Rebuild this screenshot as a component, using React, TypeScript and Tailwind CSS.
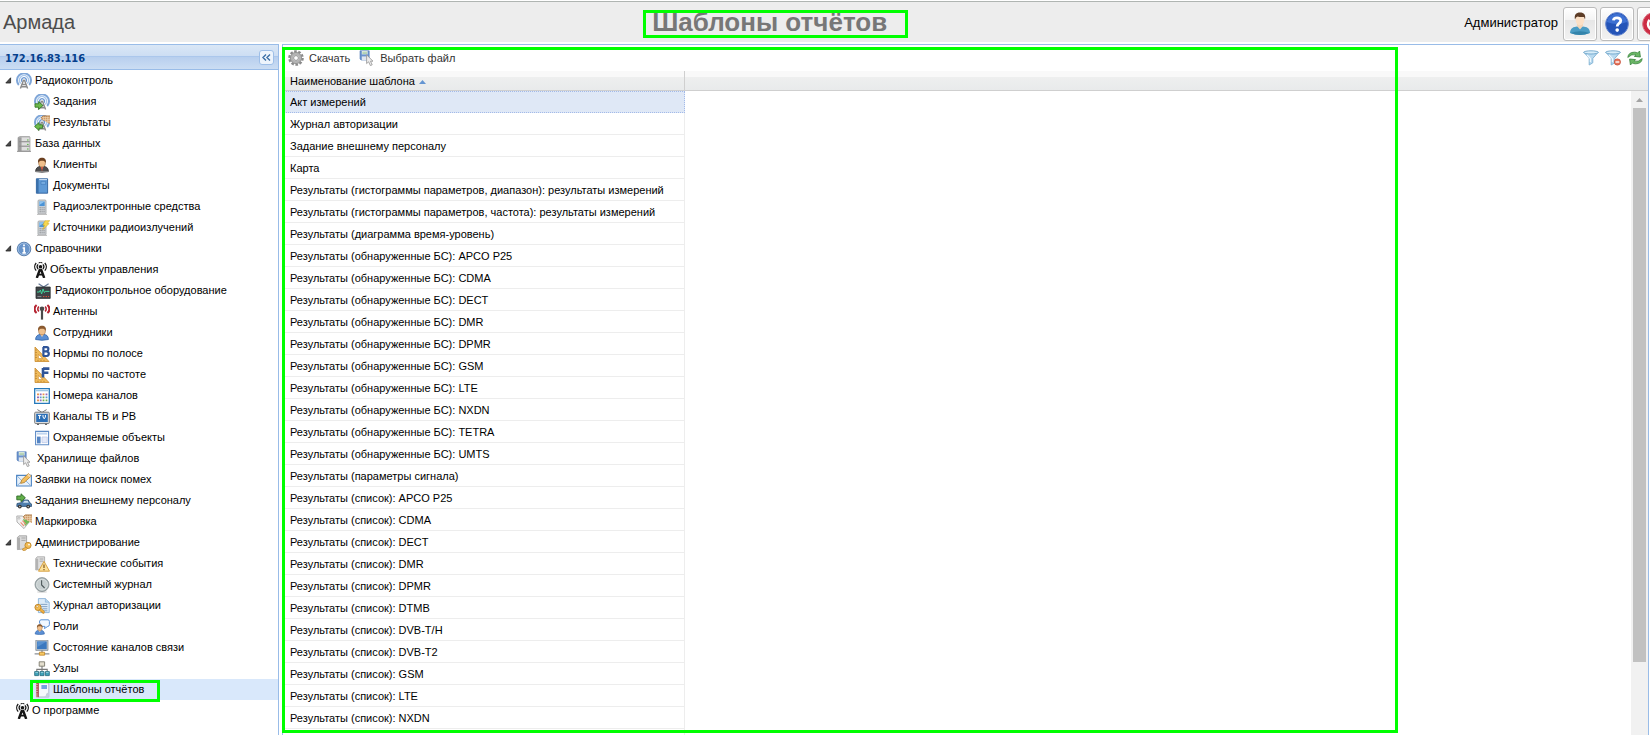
import { useState } from "react";
import type { ReactNode } from "react";

function Svg({ w = 16, h = 16, box, children }: { w?: number; h?: number; box?: string; children: ReactNode }) {
  return (
    <svg width={w} height={h} viewBox={box ?? `0 0 ${w} ${h}`} className="block shrink-0" aria-hidden="true">
      {children}
    </svg>
  );
}

function Waves() {
  return (
    <g fill="none">
      <path d="M2.8 12A7 7 0 1 1 13.2 12" stroke="#7fa6d8" strokeWidth="2" />
      <path d="M4.7 10.4A4.6 4.6 0 1 1 11.3 10.4" stroke="#a9c8ec" strokeWidth="1.5" />
      <path d="M6.2 8.8A2.4 2.4 0 1 1 9.8 8.8" stroke="#6f9ad2" strokeWidth="1.3" />
      <path d="M7.7 6.8L4.4 15.6M8.3 6.8L11.6 15.6M6.2 11.5H9.8M5.4 13.8H10.6" stroke="#8b8b8b" strokeWidth="1.4" />
    </g>
  );
}

function Hatch() {
  return (
    <g>
      <path d="M7 3L9 .8H16V9L14 8L11 6L8 5Z" fill="#cd9a68" />
      <path d="M8 2.5H15M9 4.5H16M11 6.5H16M9.5 1V5M11.5 1V6M13.5 1V8M15 1V8" stroke="#efd3b0" strokeWidth=".6" />
      <path d="M7 3L9 1H16" fill="none" stroke="#a87848" strokeWidth=".8" />
    </g>
  );
}

function Server() {
  return (
    <g>
      <path d="M2 1.5L4 .5H13.5L14 1.5V15H2Z" fill="#b9b9b9" stroke="#9b9b9b" strokeWidth=".7" />
      <path d="M2 1.5H5V15H2Z" fill="#9d9d9d" />
      <path d="M6 1.6H13.4V5.2H6ZM6 6.2H13.4V9.8H6ZM6 10.8H13.4V14.4H6Z" fill="#dedede" />
      <path d="M3 5.7H13.5M3 10.2H13.5M1 15.4H15" stroke="#8b8b8b" strokeWidth=".9" />
      <path d="M11 4H12.6M11 8.4H12.6M11 13H12.6" stroke="#58b442" strokeWidth="1" />
    </g>
  );
}

function Phone() {
  return (
    <g>
      <rect x="4" y="1" width="8" height="14" rx="1" fill="#d2d5d8" stroke="#9a9ea1" strokeWidth=".8" />
      <rect x="5.3" y="2.5" width="5.4" height="4.6" fill="#4b93d6" />
      <path d="M5.3 2.5H10.7L5.3 6Z" fill="#8fc4f0" />
      <path d="M5.4 8.8H7M7.4 8.8H8.8M9.3 8.8H10.8M5.4 10.8H7M7.4 10.8H8.8M9.3 10.8H10.8M5.4 12.8H7M7.4 12.8H8.8M9.3 12.8H10.8" stroke="#8d9195" strokeWidth="1" />
      <path d="M3 15.4H13" stroke="#bcbcbc" />
    </g>
  );
}

function Person({ hair = "#8a5a30", body = "#5b8fd4", edge = "#2e62a8" }: { hair?: string; body?: string; edge?: string }) {
  return (
    <g>
      <path d="M1.6 14.5C1.6 11 4 9.6 6 9.4H10C12.4 9.6 14.4 11 14.4 14.5Q8 16 1.6 14.5Z" fill={body} stroke={edge} strokeWidth=".8" />
      <path d="M6 9L8 12L10 9Z" fill="#f5d6b4" />
      <ellipse cx="8" cy="5.8" rx="3.4" ry="4.1" fill="#f0c08c" stroke="#9c6a3c" strokeWidth=".6" />
      <path d="M4.2 6C3.6 2.4 5.2 .8 8 .8S12.4 2.4 11.8 6C11 4.4 10 3.8 8 3.8S5 4.4 4.2 6Z" fill={hair} />
    </g>
  );
}

function Ruler({ children }: { children: ReactNode }) {
  return (
    <g>
      <path d="M1 1L15 15.5H1Z" fill="#f0bb5c" stroke="#c98a2c" strokeWidth=".8" />
      <path d="M4.4 8.4L8.8 12.6H4.4Z" fill="#fff" stroke="#c98a2c" strokeWidth=".6" />
      <path d="M1.4 4H2.8M1.4 6.5H2.8M1.4 9H2.8M1.4 11.5H2.8M4 13.8V15M7 13.8V15M10 13.8V15" stroke="#9a6418" strokeWidth=".6" />
      {children}
    </g>
  );
}

function FloppyCursor() {
  return (
    <g>
      <path d="M1 .8H10.2V10H2L1 9Z" fill="#6b93cd" stroke="#4f79b5" strokeWidth=".6" />
      <path d="M2.8 1H8.6V4.4H2.8Z" fill="#e9f2e9" />
      <path d="M3.4 2.2H8M3.4 3.4H8" stroke="#7fb37f" strokeWidth=".6" />
      <path d="M2.8 6.4H8.4V10H2.8Z" fill="#dfe6ef" />
      <path d="M7.6 4.8V13.6L9.6 11.8L11.4 15.6L13.2 14.8L11.5 11.2H14Z" fill="#ececec" stroke="#939393" strokeWidth=".8" />
    </g>
  );
}

function GreenArrow({ flip = false }: { flip?: boolean }) {
  return (
    <path
      d={flip ? "M.6 11.5L5 7.6V9.8H8.6V13.2H5V15.4Z" : "M9 11.5L4.6 7.6V9.8H1V13.2H4.6V15.4Z"}
      fill="#6dbb4c"
      stroke="#38772a"
      strokeWidth=".9"
      strokeLinejoin="round"
    />
  );
}

function Key() {
  return (
    <g>
      <circle cx="4" cy="9.4" r="3.1" fill="#f3bd55" stroke="#b97a1a" strokeWidth=".8" />
      <circle cx="3.2" cy="8.6" r="1" fill="#fff" stroke="#b97a1a" strokeWidth=".5" />
      <path d="M5.4 11.8L7.2 10.4L10.4 13.4L10 15.4L8.2 15L8 13.9L6.9 13.8Z" fill="#eeb043" stroke="#b97a1a" strokeWidth=".6" />
    </g>
  );
}

function TowerIcon() {
  return (
    <Svg w={13}>
      <g fill="none" stroke="#161616">
        <path d="M2.2 8.6A5.6 5.6 0 0 1 2.2 1M10.8 8.6A5.6 5.6 0 0 0 10.8 1" strokeWidth="1.3" />
        <path d="M4.1 7A3.4 3.4 0 0 1 4.1 2.4M8.9 7A3.4 3.4 0 0 0 8.9 2.4" strokeWidth="1.2" />
        <path d="M4.6 .9Q6.5 -.1 8.4 .9" strokeWidth="1" />
        <path d="M6.1 7L2.8 16M6.9 7L10.2 16" strokeWidth="2.4" />
        <path d="M4.4 12.6H8.6" strokeWidth="1.8" />
      </g>
      <circle cx="6.5" cy="4.8" r="1.8" fill="#161616" />
    </Svg>
  );
}

const icons: Record<string, ReactNode> = {
  radio: <Svg><Waves /></Svg>,
  tasks: <Svg><Waves /><GreenArrow /></Svg>,
  results: <Svg><Waves /><Hatch /><GreenArrow flip /></Svg>,
  server: <Svg><Server /></Svg>,
  clients: (
    <Svg>
      <Person hair="#6b4020" body="#4d4d4f" edge="#2f2f31" />
      <path d="M7 10L8 15L9 10Z" fill="#d6533a" />
      <path d="M1.6 14.8H14.4" stroke="#b9b9b9" strokeWidth=".8" />
    </Svg>
  ),
  book: (
    <Svg>
      <path d="M2.4 .8H13.6V15.2H2.4Z" fill="#5f9ad6" stroke="#2d5f9b" strokeWidth=".9" />
      <path d="M2.4 .8H4.6V15.2H2.4Z" fill="#3a71ab" />
      <path d="M7 3.4H11.6V6.4H7Z" fill="#76ace0" stroke="#3f79b8" strokeWidth=".6" />
      <path d="M5.2 1.6H13" stroke="#cfe2f5" />
    </Svg>
  ),
  phone: <Svg><Phone /></Svg>,
  source: (
    <Svg>
      <Phone />
      <path d="M11 .8L15.8 .6L13.2 3.6H15.2L8.8 9.6L10.6 5.2H8.8Z" fill="#f7d84e" stroke="#d0a521" strokeWidth=".5" />
    </Svg>
  ),
  info: (
    <Svg>
      <circle cx="8" cy="8" r="6.8" fill="#6793c9" stroke="#41699c" strokeWidth=".8" />
      <circle cx="8" cy="8" r="5.9" fill="none" stroke="#a9c5e6" strokeWidth=".8" />
      <path d="M8 3.4V5.2M6.6 7H8.2V11.8M6.4 11.9H9.8" fill="none" stroke="#fff" strokeWidth="1.7" />
    </Svg>
  ),
  tower: <TowerIcon />,
  equipment: (
    <Svg w={18}>
      <path d="M4.6 .8L9.6 4L14.6 .8" fill="none" stroke="#667a96" strokeWidth="1.2" />
      <path d="M2 4H16.2V15.4H2Z" fill="#3f4347" stroke="#2a2c2e" strokeWidth=".8" />
      <path d="M3 9H5.4L6.4 7L7.6 11L9 6L10.4 9.6L11.2 8.4H15.4" fill="none" stroke="#41d39a" strokeWidth="1" />
      <path d="M9 13.6H10.4M11.6 13.6H13M14 13.6H15.2" stroke="#e0503c" />
      <path d="M3.4 13.6H7.4" stroke="#8b8f93" />
    </Svg>
  ),
  antenna: (
    <Svg>
      <g fill="none" stroke="#b52532">
        <path d="M2.6 9A5 5 0 0 1 2.6 1M13.4 9A5 5 0 0 0 13.4 1" strokeWidth="2.1" />
        <path d="M5 7.4A3 3 0 0 1 5 2.6M11 7.4A3 3 0 0 0 11 2.6" strokeWidth="1.6" />
      </g>
      <circle cx="8" cy="4.8" r="2.3" fill="#4a4a4a" />
      <path d="M8 5V15.6" stroke="#4a4a4a" strokeWidth="2.2" />
    </Svg>
  ),
  person: <Svg><Person /></Svg>,
  band: (
    <Svg>
      <Ruler>
        <path d="M9 1.2H12.8Q14.4 1.2 14.4 3T12.8 5.4H9.4M12.8 5.4Q14.8 5.8 14.8 7.8T12.8 10H9M9.4 1V10.2" fill="none" stroke="#2f5599" strokeWidth="2.2" />
      </Ruler>
    </Svg>
  ),
  freq: (
    <Svg>
      <Ruler>
        <path d="M9 1.6H15.4M9 5.8H14.4M9 1V10.6" fill="none" stroke="#2f5599" strokeWidth="2.6" />
      </Ruler>
    </Svg>
  ),
  calendar: (
    <Svg>
      <path d="M.7 .7H15.3V15.3H.7Z" fill="#fff" stroke="#2579ba" strokeWidth="1.3" />
      <path d="M2 2.6H14" stroke="#9cc6e4" strokeWidth="1.4" />
      <path d="M3 6.4H5M8.6 6.4H10.4M3 12.4H5" stroke="#e9904c" strokeWidth="1.8" />
      <path d="M5.8 6.4H7.6M11.6 6.4H13.4M5.8 12.4H7.6M3 9.4H5" stroke="#9469b8" strokeWidth="1.8" />
      <path d="M5.8 9.4H7.6M11.6 9.4H13.4" stroke="#5b9bd8" strokeWidth="1.8" />
      <path d="M8.6 9.4H10.4M8.6 12.4H10.4M11.6 12.4H13.4" stroke="#72ad50" strokeWidth="1.8" />
    </Svg>
  ),
  tv: (
    <Svg>
      <path d="M3.4 .6L8 3.4L12.6 .6" fill="none" stroke="#777" strokeWidth="1" />
      <rect x=".7" y="3.2" width="14.6" height="11.4" rx="1" fill="#dedede" stroke="#77797b" />
      <rect x="2.2" y="4.8" width="11.6" height="8.2" fill="#2b6fb7" />
      <path d="M4 6.4H7.2M5.6 6.4V10M9 6V8L10.2 9.8L11.4 8V6" fill="none" stroke="#fff" strokeWidth="1" />
      <path d="M3 15.4H5M11 15.4H13" stroke="#555" />
    </Svg>
  ),
  layout: (
    <Svg>
      <path d="M1.6 1.4H14.6V14.8H1.6Z" fill="#fff" stroke="#5f8cc6" strokeWidth="1.1" />
      <path d="M3 3.6H13.2" stroke="#c1d6f0" strokeWidth="2" />
      <path d="M3 6.6H6.6V13.4H3Z" fill="#5686c5" />
      <path d="M8 7H13.2V12.6H8Z" fill="#e4e9f8" stroke="#b9c6e6" strokeWidth=".7" />
    </Svg>
  ),
  files: <Svg w={18}><FloppyCursor /></Svg>,
  mail: (
    <Svg>
      <path d="M.6 3.4H15.4V14H.6Z" fill="#e8f1fa" stroke="#4f86c4" strokeWidth="1.1" />
      <path d="M1.2 13.6L6 9M14.8 13.6L10 9M1.2 4L7 10H9" fill="none" stroke="#8db3dc" strokeWidth="1" />
      <path d="M4.6 11.4L5.8 7.8L12.4 1.6L15.2 4L8.2 10.6Z" fill="#f2bd5c" stroke="#b4802f" strokeWidth=".8" />
      <path d="M12.6 1.8L15 4L13.6 5.2L11.2 3.2Z" fill="#f6d9b0" />
    </Svg>
  ),
  car: (
    <Svg>
      <path d="M1 10.5L5.6 9.6L7.8 7H12.2L14 10L15.6 11V13.4H.8Z" fill="#4f7fae" stroke="#2d5175" strokeWidth=".8" />
      <path d="M7 9.8L8.6 7.8H11.6L12.8 9.8Z" fill="#cfe1f0" />
      <circle cx="3.8" cy="13.6" r="1.9" fill="#333" /><circle cx="12.2" cy="13.6" r="1.9" fill="#333" />
      <circle cx="3.8" cy="13.6" r=".8" fill="#bbb" /><circle cx="12.2" cy="13.6" r=".8" fill="#bbb" />
      <path d="M9.4 4.8L5 .8V3H.8V6.8H5V8.8Z" fill="#62ae49" stroke="#2f6b28" strokeWidth=".9" />
    </Svg>
  ),
  tag: (
    <Svg>
      <path d="M.8 2H6.6L12.8 8.4L8 14.6L1 8Z" fill="#f1f1f1" stroke="#a9a9a9" strokeWidth=".9" />
      <circle cx="3" cy="4.2" r="1" fill="#fff" stroke="#999" strokeWidth=".6" />
      <path d="M7 5L9 12L14.6 7Z" fill="#71ba58" />
      <path d="M4.6 8.4L8 12M6.4 6.6L9.8 10.2" stroke="#ef8e76" strokeWidth="1.1" />
      <Hatch />
    </Svg>
  ),
  admin: (
    <Svg>
      <path d="M1.4 2.6L3 .8H10.6V13.6L1.4 14.6Z" fill="#dadada" stroke="#999" strokeWidth=".8" />
      <path d="M1.4 2.6H4V14.4L1.4 14.6Z" fill="#adadad" />
      <path d="M5.4 3H9.6M5.4 5.4H9.6" stroke="#999" strokeWidth=".8" />
      <circle cx="12" cy="10.4" r="3.1" fill="#f3bd55" stroke="#b98225" strokeWidth=".8" />
      <circle cx="13" cy="9.6" r=".9" fill="#fff" />
      <path d="M10 12L6.4 14L7 15.6H9L11.6 13.4Z" fill="#f0b650" stroke="#b98225" strokeWidth=".6" />
    </Svg>
  ),
  events: (
    <Svg>
      <path d="M1.8 2.6L3.2 .8H10.6V13L1.8 14Z" fill="#e0e0e0" stroke="#a3a3a3" strokeWidth=".8" />
      <path d="M1.8 2.6H4.2V13.8H1.8Z" fill="#b3b3b3" />
      <path d="M5.6 3H9.4M5.6 5.2H9.4" stroke="#999" strokeWidth=".8" />
      <path d="M10 5.4L15.5 15.2H4.5Z" fill="#fbe09a" stroke="#d49a32" strokeWidth=".9" strokeLinejoin="round" />
      <path d="M10 8.4V12M10 13V14.2" stroke="#82561b" strokeWidth="1.2" />
    </Svg>
  ),
  clock: (
    <Svg>
      <ellipse cx="8" cy="15" rx="5" ry=".9" fill="#dedede" />
      <circle cx="8" cy="7.6" r="7" fill="#a5b0b2" stroke="#879193" strokeWidth=".8" />
      <circle cx="8" cy="7.6" r="5.5" fill="#c7cfd0" stroke="#e1e6e6" strokeWidth=".8" />
      <path d="M7.6 3.2V8L10.6 11" fill="none" stroke="#4d5759" strokeWidth="1.1" />
    </Svg>
  ),
  authlog: (
    <Svg>
      <path d="M4.4 .6H11.4L15.2 4.2V14.6H4.4Z" fill="#dcebf8" stroke="#8bb3d8" strokeWidth=".9" />
      <path d="M11.4 .6V4.2H15.2" fill="#b9d6ef" stroke="#8bb3d8" strokeWidth=".7" />
      <path d="M6.4 6.4H13.4M6.4 8.6H13.4M8.4 10.8H13.4M9.4 12.8H13.4" stroke="#7c9cc0" strokeWidth=".9" />
      <Key />
    </Svg>
  ),
  roles: (
    <Svg>
      <path d="M7 .8H14Q15.4 .8 15.4 2.4V5.6Q15.4 7.4 13.8 7.4L10.4 9.6L11 7.4H8Q6 6 5.4 3Q5.6 .8 7 .8Z" fill="#f2f8ff" stroke="#5d93d6" strokeWidth="1" />
      <g transform="translate(0 4.6) scale(.72)"><Person /></g>
    </Svg>
  ),
  channels: (
    <Svg>
      <path d="M2.4 .8H13.4V9.8H2.4Z" fill="#3a78bf" stroke="#c4cbd2" strokeWidth="1.3" />
      <path d="M3.4 1.6H12.6L3.4 7Z" fill="#5690d0" />
      <path d="M1.8 .2H14V10.4H1.8Z" fill="none" stroke="#67737f" strokeWidth=".6" />
      <path d="M8 10V13.4M.6 13.8H15.4" stroke="#8b9096" strokeWidth="1.3" />
      <path d="M5.4 12.2H10.6V15.2H5.4Z" fill="#f6c964" stroke="#c08424" strokeWidth=".8" />
    </Svg>
  ),
  nodes: (
    <Svg>
      <path d="M8 5V8.4M2.8 11V8.4H13.2V11M8 8.4V11" fill="none" stroke="#7a7a7a" strokeWidth="1.1" />
      <path d="M5.2 .8H10.6V5.2H5.2Z" fill="#e4dfcf" stroke="#7d7a6e" strokeWidth=".9" />
      <path d="M.7 10.6H4.6V14.6H.7ZM6 10.6H10V14.6H6ZM11.4 10.6H15.3V14.6H11.4Z" fill="#3fa3ba" stroke="#2b7285" strokeWidth=".9" />
      <path d="M1.4 11.4H4M6.8 11.4H9.4M12 11.4H14.6" stroke="#a8dbe5" strokeWidth=".8" />
    </Svg>
  ),
  template: (
    <Svg>
      <path d="M4.4 1H14.8V15H4.4Z" fill="#f6f8fc" stroke="#a8b3c7" strokeWidth=".9" />
      <path d="M2.2 .8H4.8V15.2H2.2Z" fill="#b2474a" />
      <path d="M1.4 2.4H3.8M1.4 4.8H3.8M1.4 7.2H3.8M1.4 9.6H3.8M1.4 12H3.8M1.4 14H3.8" stroke="#e9c9c9" strokeWidth=".8" />
      <path d="M7.4 4H13M7.4 6H13" stroke="#4b86d8" strokeWidth="1.3" />
      <path d="M10.4 14.8Q12.4 13.6 12.2 11.8L14.8 10V15Z" fill="#c5cedd" />
    </Svg>
  ),
};

type Node = { text: string; icon: string; children?: Node[] };

const tree: Node[] = [
  {
    text: "Радиоконтроль",
    icon: "radio",
    children: [
      { text: "Задания", icon: "tasks" },
      { text: "Результаты", icon: "results" },
    ],
  },
  {
    text: "База данных",
    icon: "server",
    children: [
      { text: "Клиенты", icon: "clients" },
      { text: "Документы", icon: "book" },
      { text: "Радиоэлектронные средства", icon: "phone" },
      { text: "Источники радиоизлучений", icon: "source" },
    ],
  },
  {
    text: "Справочники",
    icon: "info",
    children: [
      { text: "Объекты управления", icon: "tower" },
      { text: "Радиоконтрольное оборудование", icon: "equipment" },
      { text: "Антенны", icon: "antenna" },
      { text: "Сотрудники", icon: "person" },
      { text: "Нормы по полосе", icon: "band" },
      { text: "Нормы по частоте", icon: "freq" },
      { text: "Номера каналов", icon: "calendar" },
      { text: "Каналы ТВ и РВ", icon: "tv" },
      { text: "Охраняемые объекты", icon: "layout" },
    ],
  },
  { text: "Хранилище файлов", icon: "files" },
  { text: "Заявки на поиск помех", icon: "mail" },
  { text: "Задания внешнему персоналу", icon: "car" },
  { text: "Маркировка", icon: "tag" },
  {
    text: "Администрирование",
    icon: "admin",
    children: [
      { text: "Технические события", icon: "events" },
      { text: "Системный журнал", icon: "clock" },
      { text: "Журнал авторизации", icon: "authlog" },
      { text: "Роли", icon: "roles" },
      { text: "Состояние каналов связи", icon: "channels" },
      { text: "Узлы", icon: "nodes" },
      { text: "Шаблоны отчётов", icon: "template" },
    ],
  },
  { text: "О программе", icon: "tower" },
];

const SELECTED = "Шаблоны отчётов";

const rows = [
  "Акт измерений",
  "Журнал авторизации",
  "Задание внешнему персоналу",
  "Карта",
  "Результаты (гистограммы параметров, диапазон): результаты измерений",
  "Результаты (гистограммы параметров, частота): результаты измерений",
  "Результаты (диаграмма время-уровень)",
  ...["APCO P25", "CDMA", "DECT", "DMR", "DPMR", "GSM", "LTE", "NXDN", "TETRA", "UMTS"].map(
    (s) => `Результаты (обнаруженные БС): ${s}`,
  ),
  "Результаты (параметры сигнала)",
  ...["APCO P25", "CDMA", "DECT", "DMR", "DPMR", "DTMB", "DVB-T/H", "DVB-T2", "GSM", "LTE", "NXDN"].map(
    (s) => `Результаты (список): ${s}`,
  ),
];

function TreeItem({ node, child = false }: { node: Node; child?: boolean }) {
  const [open, setOpen] = useState(true);
  const selected = node.text === SELECTED;
  return (
    <li>
      <div className={`relative flex h-[21px] items-center ${selected ? "bg-[#d9e8fb]" : ""} ${child ? "pl-[34px]" : ""}`}>
        {!child && (
          <span className="flex w-4 shrink-0 items-center pl-[5px]">
            {node.children && (
              <button type="button" aria-label={node.text} aria-expanded={open} onClick={() => setOpen(!open)}>
                <Svg w={7} h={7}>
                  <path d="M5.6 .8V6H.8Z" fill="#4a4a4a" stroke="#222" strokeWidth=".8" />
                </Svg>
              </button>
            )}
          </span>
        )}
        <a href="#" className="flex h-full items-center gap-[3px] whitespace-nowrap">
          {icons[node.icon]}
          {node.text}
        </a>
        {selected && (
          <span className="pointer-events-none absolute top-px left-[30px] h-[22px] w-[130px] border-3 border-[#00ff00]" />
        )}
      </div>
      {node.children && open && (
        <ul>
          {node.children.map((n) => (
            <TreeItem key={n.text} node={n} child />
          ))}
        </ul>
      )}
    </li>
  );
}

function Funnel({ remove = false }: { remove?: boolean }) {
  return (
    <Svg>
      <path d="M.8 2.2L6.2 8.4V15L9.8 12.8V8.4L15.2 2.2Z" fill="#b8daf0" stroke="#7fb0d1" strokeWidth=".9" strokeLinejoin="round" />
      <ellipse cx="8" cy="2.4" rx="7.3" ry="1.6" fill="#d8edf9" stroke="#6fa6cb" strokeWidth=".9" />
      <path d="M4 5L7.4 8.6V12" fill="none" stroke="#eef8fe" strokeWidth="1.2" />
      {remove && (
        <>
          <circle cx="12.4" cy="12" r="3.1" fill="#e7765e" stroke="#c7523c" strokeWidth=".8" />
          <path d="M10.5 12H14.3" stroke="#fff" strokeWidth="1.4" />
        </>
      )}
    </Svg>
  );
}

const headerButton =
  "flex size-[34px] shrink-0 items-center justify-center rounded-[3px] border border-[#bbbbbb] bg-[linear-gradient(#ffffff,#f4f4f4_36%,#e6e6e6_37%,#f2f2f2)] shadow-[inset_0_0_0_1px_#ffffff]";

export default function App() {
  return (
    <div className="flex h-screen flex-col overflow-hidden bg-white pt-px font-['Liberation_Sans',Arial,sans-serif] text-[11px] leading-[13px] text-black">
      <header className="flex h-[41px] shrink-0 items-center overflow-hidden border-t border-[#b0b5b2] bg-[#ededed]">
        <span className="pl-[3px] text-[20px] leading-6 text-[#4c4c4c]">Армада</span>
        <div className="flex flex-1 justify-center">
          <div className="relative">
            <h1 className="text-[26px] leading-7 font-bold text-[#777777]">Шаблоны отчётов</h1>
            <span className="pointer-events-none absolute top-[2px] -right-[21px] -bottom-[2px] -left-[9px] border-3 border-[#00ff00]" />
          </div>
        </div>
        <div className="-mr-[21px] flex shrink-0 items-center gap-[3px] pt-1">
          <span className="pr-[2px] pb-[2px] text-[13px] leading-4">Администратор</span>
          <button type="button" aria-label="Профиль" className={headerButton}>
            <Svg w={24} h={24}>
              <path d="M2 21C2 16 6 14.6 9 14.4H15C18.4 14.6 22 16 22 21Q12 25 2 21Z" fill="#4a9cc4" />
              <path d="M2.4 21Q12 17.6 21.6 21Q12 25 2.4 21Z" fill="#3384ab" />
              <path d="M9 14L12 17.4L15 14V11H9Z" fill="#f3d5b8" />
              <ellipse cx="12" cy="7.6" rx="4.4" ry="6" fill="#fbe0c6" />
              <path d="M7 7.6C6 3 8 .6 12 .6S18 3 17 7.6L16 5Q12 5.4 9.6 4.4L8 5.4Z" fill="#5d3d27" />
            </Svg>
          </button>
          <button type="button" aria-label="Справка" className={headerButton}>
            <Svg w={24} h={24}>
              <circle cx="12" cy="12" r="11.4" fill="#2454b8" stroke="#6c8bd0" strokeWidth="1" />
              <path d="M1.8 10A10.4 10.4 0 0 1 22.2 10Q12 14 1.8 10Z" fill="#3d70d2" />
              <path d="M8.4 8.4Q8.6 5.8 12 5.8T15.8 8.6Q15.8 10.2 14 11.4T12.2 14.6" fill="none" stroke="#fff" strokeWidth="2.8" />
              <circle cx="12.2" cy="18.1" r="1.8" fill="#fff" />
            </Svg>
          </button>
          <button type="button" aria-label="Выход" className={headerButton}>
            <Svg w={24} h={24}>
              <circle cx="12" cy="12" r="11.4" fill="#cc2b43" stroke="#d97583" strokeWidth="1" />
              <path d="M7.6 8A6 6 0 1 0 16.4 8M12 4.6V11.6" fill="none" stroke="#fff" strokeWidth="2.6" />
            </Svg>
          </button>
        </div>
      </header>

      <div className="flex min-h-0 flex-1 gap-[3px] pt-[2px] pr-px">
        <aside className="flex w-[279px] shrink-0 flex-col border-t border-r border-[#99bce8]">
          <div className="flex h-[25px] shrink-0 items-center justify-between border-b border-[#99bce8] bg-[linear-gradient(#dae7f6,#cddef3_45%,#abc7ec_46%,#abc7ec_50%,#b8cfee_51%,#cbddf3)] pr-1 pl-[5px]">
            <h2 className="pt-[2px] font-['DejaVu_Sans_Condensed','DejaVu_Sans',sans-serif] font-bold text-[#04408c]">
              172.16.83.116
            </h2>
            <button
              type="button"
              aria-label="Свернуть"
              className="flex size-[15px] items-center justify-center rounded-[3px] border border-[#9ebfe8] bg-[#edf4fc]"
            >
              <Svg w={9} h={7}>
                <path d="M4 .6L1 3.5L4 6.4M8 .6L5 3.5L8 6.4" fill="none" stroke="#3a6ea5" strokeWidth="1.4" />
              </Svg>
            </button>
          </div>
          <nav className="min-h-0 flex-1 overflow-hidden">
            <ul>
              {tree.map((n) => (
                <TreeItem key={n.text} node={n} />
              ))}
            </ul>
          </nav>
        </aside>

        <main className="relative flex min-w-0 flex-1 flex-col border-x border-t border-[#99bce8]">
          <div className="flex h-[26px] shrink-0 items-center px-[5px] text-[#333333]">
            <button type="button" className="flex items-center gap-[5px]">
              <Svg>
                <g fill="none" stroke="#8a8a8a">
                  <circle cx="8" cy="8" r="6.6" strokeWidth="2.4" strokeDasharray="2.6 1.55" />
                  <circle cx="8" cy="8" r="4.3" stroke="#b4b4b4" strokeWidth="3" />
                  <circle cx="8" cy="8" r="5.6" strokeWidth=".8" />
                  <circle cx="8" cy="8" r="2.4" strokeWidth=".9" />
                </g>
              </Svg>
              Скачать
            </button>
            <button type="button" className="ml-[9px] flex items-center gap-[5px]">
              <Svg><FloppyCursor /></Svg>
              Выбрать файл
            </button>
            <div className="ml-auto flex gap-[6px]">
              <button type="button" aria-label="Фильтр"><Funnel /></button>
              <button type="button" aria-label="Сбросить фильтр"><Funnel remove /></button>
              <button type="button" aria-label="Обновить">
                <Svg>
                  <path d="M.8 7.4Q1.4 2.2 7.4 2.2Q9.4 2.2 10.6 3L12.6 1L13.4 7L7.4 6.4L9 4.8Q4.6 3.6 .8 7.4Z" fill="#6ab765" stroke="#36833b" strokeWidth=".8" strokeLinejoin="round" />
                  <path d="M15.2 8.6Q14.6 13.8 8.6 13.8Q6.6 13.8 5.4 13L3.4 15L2.6 9L8.6 9.6L7 11.2Q11.4 12.4 15.2 8.6Z" fill="#6ab765" stroke="#36833b" strokeWidth=".8" strokeLinejoin="round" />
                </Svg>
              </button>
            </div>
          </div>

          <div className="relative flex min-h-0 flex-1 overflow-hidden">
            <div className="min-w-0 flex-1">
              <table className="w-full table-fixed border-separate border-spacing-0 text-left">
                <thead>
                  <tr className="h-5 bg-[linear-gradient(#f9f9f9,#f9f9f9_30%,#eeefef_31%,#e8eaeb)]">
                    <th scope="col" className="w-[402px] border-r border-b border-[#cfcfcf] p-0 pt-[2px] pl-[7px] font-normal">
                      <button type="button" className="flex items-center gap-1">
                        Наименование шаблона
                        <Svg w={7} h={4}><path d="M3.5 0L7 4H0Z" fill="#6495d2" /></Svg>
                      </button>
                    </th>
                    <th className="border-b border-[#cfcfcf] p-0" />
                  </tr>
                </thead>
                <tbody>
                  {rows.map((r, i) => (
                    <tr key={r} className="h-[22px]">
                      <td
                        className={
                          i === 0
                            ? "border-y border-r border-dotted border-[#a3bae9] bg-[#dfe8f6] p-0 pl-[7px]"
                            : "border-r border-b border-[#ededed] p-0 pt-[2px] pl-[7px]"
                        }
                      >
                        {r}
                      </td>
                    </tr>
                  ))}
                  <tr className="h-[22px]">
                    <td className="border-r border-b border-[#ededed] p-0" />
                  </tr>
                </tbody>
              </table>
            </div>
            <div className="flex w-[17px] shrink-0 flex-col bg-[linear-gradient(#f9f9f9,#f9f9f9_30%,#eeefef_31%,#e8eaeb)] bg-size-[100%_20px] bg-no-repeat pt-[19px]">
              <div className="flex min-h-0 flex-1 flex-col items-center border-t border-[#cfcfcf] bg-[#f1f1f1]">
                <div className="flex h-[17px] items-center">
                  <Svg w={7} h={4}><path d="M3.5 0L7 4H0Z" fill="#a3a3a3" /></Svg>
                </div>
                <div className="h-[86%] w-[13px] bg-[#c1c1c1]" />
              </div>
            </div>
          </div>
          <span className="pointer-events-none absolute top-[2px] right-[250px] bottom-[2px] -left-px border-3 border-[#00ff00]" />
        </main>
      </div>
    </div>
  );
}
